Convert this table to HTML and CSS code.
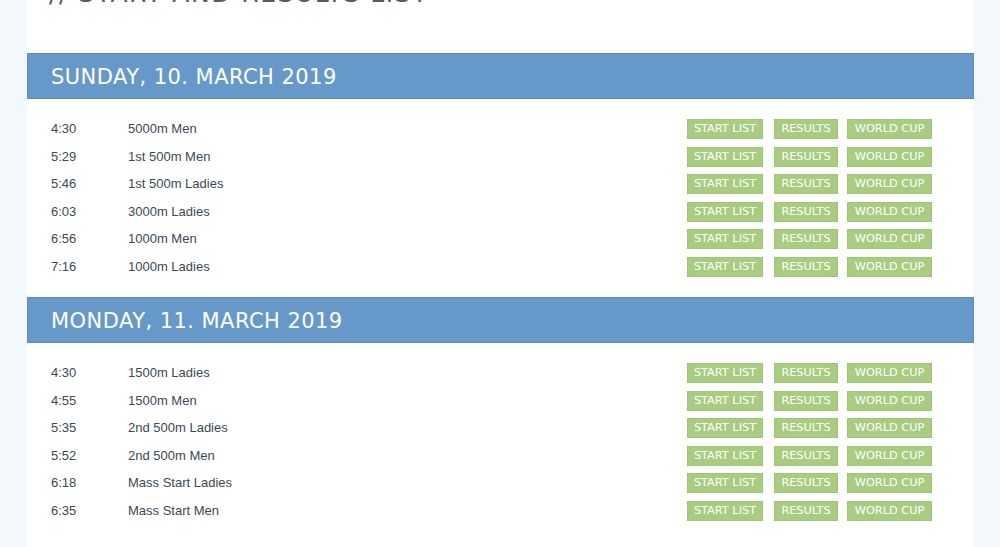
FILE: index.html
```html
<!DOCTYPE html>
<html>
<head>
<meta charset="utf-8">
<link rel="stylesheet" href="styles.css">
</head>
<body>
<div class="panel">
  <h1 class="title">// START AND RESULTS LIST</h1>

  <section class="day">
    <h2 class="day-bar">SUNDAY, 10. MARCH 2019</h2>
    <div class="rows">
      <div class="row"><span class="time">4:30</span><span class="race">5000m Men</span><div class="btns"><a class="btn">START LIST</a><a class="btn b2">RESULTS</a><a class="btn b3">WORLD CUP</a></div></div>
      <div class="row"><span class="time">5:29</span><span class="race">1st 500m Men</span><div class="btns"><a class="btn">START LIST</a><a class="btn b2">RESULTS</a><a class="btn b3">WORLD CUP</a></div></div>
      <div class="row"><span class="time">5:46</span><span class="race">1st 500m Ladies</span><div class="btns"><a class="btn">START LIST</a><a class="btn b2">RESULTS</a><a class="btn b3">WORLD CUP</a></div></div>
      <div class="row"><span class="time">6:03</span><span class="race">3000m Ladies</span><div class="btns"><a class="btn">START LIST</a><a class="btn b2">RESULTS</a><a class="btn b3">WORLD CUP</a></div></div>
      <div class="row"><span class="time">6:56</span><span class="race">1000m Men</span><div class="btns"><a class="btn">START LIST</a><a class="btn b2">RESULTS</a><a class="btn b3">WORLD CUP</a></div></div>
      <div class="row"><span class="time">7:16</span><span class="race">1000m Ladies</span><div class="btns"><a class="btn">START LIST</a><a class="btn b2">RESULTS</a><a class="btn b3">WORLD CUP</a></div></div>
    </div>
  </section>

  <section class="day">
    <h2 class="day-bar">MONDAY, 11. MARCH 2019</h2>
    <div class="rows">
      <div class="row"><span class="time">4:30</span><span class="race">1500m Ladies</span><div class="btns"><a class="btn">START LIST</a><a class="btn b2">RESULTS</a><a class="btn b3">WORLD CUP</a></div></div>
      <div class="row"><span class="time">4:55</span><span class="race">1500m Men</span><div class="btns"><a class="btn">START LIST</a><a class="btn b2">RESULTS</a><a class="btn b3">WORLD CUP</a></div></div>
      <div class="row"><span class="time">5:35</span><span class="race">2nd 500m Ladies</span><div class="btns"><a class="btn">START LIST</a><a class="btn b2">RESULTS</a><a class="btn b3">WORLD CUP</a></div></div>
      <div class="row"><span class="time">5:52</span><span class="race">2nd 500m Men</span><div class="btns"><a class="btn">START LIST</a><a class="btn b2">RESULTS</a><a class="btn b3">WORLD CUP</a></div></div>
      <div class="row"><span class="time">6:18</span><span class="race">Mass Start Ladies</span><div class="btns"><a class="btn">START LIST</a><a class="btn b2">RESULTS</a><a class="btn b3">WORLD CUP</a></div></div>
      <div class="row"><span class="time">6:35</span><span class="race">Mass Start Men</span><div class="btns"><a class="btn">START LIST</a><a class="btn b2">RESULTS</a><a class="btn b3">WORLD CUP</a></div></div>
    </div>
  </section>
</div>
</body>
</html>
```

FILE: styles.css
```css
html, body {
  margin: 0;
  padding: 0;
  background: #f3f8fd;
  height: 100%;
  overflow: hidden;
}

.panel {
  margin-left: 27px;
  width: 947px;
  min-height: calc(100% + 40px);
  background: #ffffff;
}

.title {
  margin: -23px 0 0 0;
  padding-left: 22px;
  height: 76px;
  font-family: "DejaVu Sans", sans-serif;
  font-weight: normal;
  font-size: 25px;
  line-height: 34px;
  letter-spacing: 1.5px;
  color: #5a5a5a;
  white-space: nowrap;
}

.day-bar {
  margin: 0;
  box-sizing: content-box;
  background: #6699c9;
  border: 1px solid #5b8cbc;
  padding: 2px 0 0 23px;
  height: 42px;
  display: flex;
  align-items: center;
  font-family: "DejaVu Sans", sans-serif;
  font-weight: normal;
  font-size: 21px;
  letter-spacing: 0.45px;
  color: #ffffff;
}

.rows {
  padding: 16px 42px 17px 24px;
}

.row {
  display: flex;
  align-items: center;
  height: 27.5px;
  font-family: "Liberation Sans", Arial, sans-serif;
  font-size: 13px;
  color: #3b4954;
}

.time {
  width: 77px;
}

.race {
  flex: 1;
}

.btns {
  display: flex;
  align-items: center;
  padding-top: 1px;
}

.btn {
  display: block;
  box-sizing: border-box;
  height: 20px;
  line-height: 18px;
  padding: 0 4px;
  background: #a8cc80;
  border: 1px solid #9fc476;
  color: #ffffff;
  font-family: "DejaVu Sans", sans-serif;
  font-size: 11.3px;
  text-align: center;
  white-space: nowrap;
}

.btn:nth-child(1) { width: 76px; }
.b2 { width: 64px; margin-left: 11px; }
.b3 { width: 85px; margin-left: 9px; }
```
